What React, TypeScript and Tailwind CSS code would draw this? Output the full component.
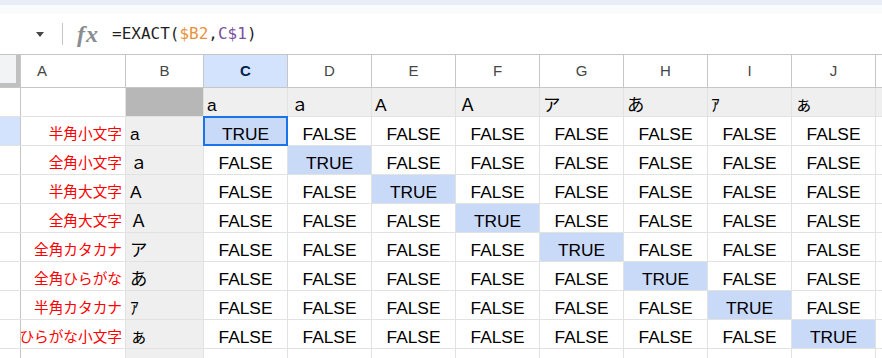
import React from "react";

const heads = ["a", "ａ", "A", "Ａ", "ア", "あ", "ｱ", "ぁ"];
const labels = [
  "半角小文字",
  "全角小文字",
  "半角大文字",
  "全角大文字",
  "全角カタカナ",
  "全角ひらがな",
  "半角カタカナ",
  "ひらがな小文字",
];
const colLetters = ["C", "D", "E", "F", "G", "H", "I", "J"];

const FONT = { fontFamily: '"Liberation Sans", "Noto Sans CJK JP", sans-serif' } as React.CSSProperties;

export default function App() {
  return (
    <div className="w-[882px] h-[358px] overflow-hidden bg-white relative" style={FONT}>
      {/* top band + formula bar */}
      <div className="h-[5px] bg-[#e9eef6]" />
      <div className="h-[9px] bg-[#f9fbfd]" />
      <div className="h-[40px] flex items-center bg-white">
        <div className="ml-[36px] w-0 h-0 border-l-[4px] border-r-[4px] border-t-[5px] border-l-transparent border-r-transparent border-t-[#444746]" />
        <div className="ml-[18px] w-px h-[22px] bg-[#c4c7c5]" />
        <div
          className="ml-[14px] text-[24px] italic font-bold text-[#8a8d90] leading-none tracking-[1px]"
          style={{ fontFamily: '"Liberation Serif", serif' }}
        >
          fx
        </div>
        <div
          className="ml-[13px] text-[16px] text-[#1f1f1f] whitespace-nowrap"
          style={{ fontFamily: '"DejaVu Sans Mono", monospace' }}
        >
          =EXACT(<span className="text-[#e8923a]">$B2</span>,<span className="text-[#7b4fa0]">C$1</span>)
        </div>
      </div>

      {/* column header row */}
      <div className="flex h-[34px] border-t border-b border-[#c4c7c5] bg-white">
        <div className="w-[21px] shrink-0 h-full relative bg-[#f1f3f4] border-r border-[#c4c7c5]">
          <div className="absolute right-0 top-0 w-[4px] h-full bg-[#c0c0c0]" />
          <div className="absolute left-0 bottom-0 w-full h-[4px] bg-[#c0c0c0]" />
        </div>
        <div className="w-[105px] shrink-0 h-full flex items-center pl-[16px] text-[15px] text-[#444746] border-r border-[#c4c7c5]">
          A
        </div>
        <div className="w-[78px] shrink-0 h-full flex items-center justify-center text-[15px] text-[#444746] border-r border-[#c4c7c5]">
          B
        </div>
        {colLetters.map((c) => (
          <div
            key={c}
            className={
              c === "C"
                ? "w-[84px] shrink-0 h-full flex items-center justify-center text-[15px] font-bold text-[#041e49] bg-[#d3e3fd] border-r border-[#c4c7c5]"
                : "w-[84px] shrink-0 h-full flex items-center justify-center text-[15px] text-[#444746] border-r border-[#c4c7c5]"
            }
          >
            {c}
          </div>
        ))}
        <div className="flex-1 h-full" />
      </div>

      {/* row 1 */}
      <div className="flex h-[29px] border-b border-[#e1e3e1]">
        <div className="w-[21px] shrink-0 h-full bg-white border-r border-[#c4c7c5]" />
        <div className="w-[105px] shrink-0 h-full border-r border-[#e1e3e1]" />
        <div className="w-[78px] shrink-0 h-full bg-[#b7b7b7] border-r border-[#e1e3e1]" />
        {heads.map((h, i) => (
          <div
            key={i}
            className="w-[84px] shrink-0 h-full bg-[#efefef] border-r border-[#e1e3e1] flex items-end pb-[1px] pl-[3px] text-[17.33px] leading-[20px] text-black whitespace-nowrap"
          >
            {h}
          </div>
        ))}
        <div className="flex-1 h-full bg-[#efefef]" />
      </div>

      {/* data rows */}
      {labels.map((lab, r) => (
        <div key={r} className="flex h-[29px] border-b border-[#e1e3e1]">
          <div
            className={
              r === 0
                ? "w-[21px] shrink-0 h-full bg-[#d3e3fd] border-r border-[#c4c7c5]"
                : "w-[21px] shrink-0 h-full bg-white border-r border-[#c4c7c5]"
            }
          />
          <div className="w-[105px] shrink-0 h-full border-r border-[#e1e3e1] flex items-end justify-end pb-[1px] pr-[3px] overflow-hidden whitespace-nowrap text-[14.67px] leading-[20px] text-[#ff0000]">
            {lab}
          </div>
          <div className="w-[78px] shrink-0 h-full bg-[#efefef] border-r border-[#e1e3e1] flex items-end pb-[1px] pl-[4px] text-[17.33px] leading-[20px] text-black whitespace-nowrap">
            {heads[r]}
          </div>
          {heads.map((_, c) => {
            const t = r === c;
            return (
              <div
                key={c}
                className={
                  t
                    ? "relative w-[84px] shrink-0 h-full bg-[#c9daf8] border-r border-[#e1e3e1] flex items-end justify-center pb-[1px] text-[17.33px] leading-[20px] text-black"
                    : "relative w-[84px] shrink-0 h-full bg-white border-r border-[#e1e3e1] flex items-end justify-center pb-[1px] text-[17.33px] leading-[20px] text-black"
                }
              >
                {t ? "TRUE" : "FALSE"}
                {r === 0 && c === 0 && (
                  <div className="absolute -left-px -top-px -right-px -bottom-px border-2 border-[#1a73e8]" />
                )}
              </div>
            );
          })}
          <div className="flex-1 h-full" />
        </div>
      ))}

      {/* partial last row */}
      <div className="flex h-[29px] border-b border-[#e1e3e1]">
        <div className="w-[21px] shrink-0 h-full bg-white border-r border-[#c4c7c5]" />
        <div className="w-[105px] shrink-0 h-full border-r border-[#e1e3e1]" />
        <div className="w-[78px] shrink-0 h-full bg-[#efefef] border-r border-[#e1e3e1]" />
        {heads.map((_, c) => (
          <div key={c} className="w-[84px] shrink-0 h-full border-r border-[#e1e3e1]" />
        ))}
        <div className="flex-1 h-full" />
      </div>
    </div>
  );
}
